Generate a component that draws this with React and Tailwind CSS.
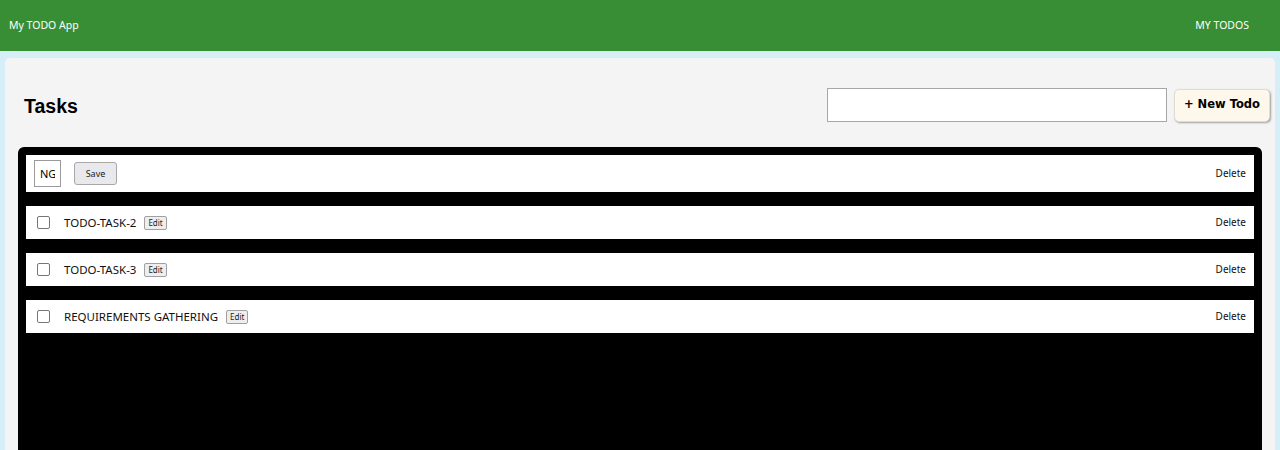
import React, { useState } from 'react';

const todos = [
    { id: 2, title: 'TODO-TASK-2' },
    { id: 3, title: 'TODO-TASK-3' },
    { id: 4, title: 'REQUIREMENTS GATHERING' },
];

function TodoRow({ todo }) {
    return (
        <div className="flex items-center h-[33px] bg-white pl-[11px] pr-[8px]">
            <input type="checkbox" className="w-[13px] h-[13px] m-0 appearance-none border border-[#767676] rounded-[2px] bg-white" />
            <span className="ml-[14px] text-[11.5px] text-[#111]">{todo.title}</span>
            <button className="ml-[8px] h-[14px] px-[3px] text-[8px] leading-none bg-[#eeeef0] border border-[#a0a0a0] rounded-[2px] text-[#222]">Edit</button>
            <button className="ml-auto text-[10px] text-[#111]">Delete</button>
        </div>
    );
}

export default function App() {
    const [name, setName] = useState('NG');

    return (
        <div className="min-h-[450px] bg-[#d6eef8] font-['Noto_Sans','Open_Sans',sans-serif]">
            {/* header */}
            <div className="flex items-center justify-between h-[51px] bg-[#388e35] text-white text-[10.5px] pl-[9px] pr-[31px]">
                <span>My TODO App</span>
                <span>MY TODOS</span>
            </div>

            <div className="px-[5px] pt-[7px]">
                <div className="bg-[#f4f4f4] rounded-t-[5px] px-[13px] pt-[30px]">
                    <div className="flex items-center justify-between pl-[6px] -mr-[8px]">
                        <h1 className="text-[19.5px] font-bold text-black font-['Liberation_Sans',sans-serif] mt-[3px]">Tasks</h1>
                        <div className="flex items-center gap-[7px]">
                            <input className="w-[340px] h-[34px] bg-white border border-[#a7a7a7] outline-none" />
                            <button className="h-[33px] px-[9px] text-[11.5px] font-bold bg-[#fdf7ec] rounded-[5px] border border-[#e0dccf] shadow-[1px_1px_2px_rgba(0,0,0,0.35)] font-['DejaVu_Sans',sans-serif] text-black">
                                + New Todo
                            </button>
                        </div>
                    </div>

                    <div className="mt-[25px] bg-black rounded-t-[6px] p-[8px] min-h-[320px] flex flex-col gap-[14px]">
                        <div className="flex items-center h-[37px] bg-white pl-[8px] pr-[8px]">
                            <input
                                value={name}
                                onChange={(e) => setName(e.target.value)}
                                className="w-[27px] h-[27px] border border-[#9a9a9a] text-[11px] px-[5px] outline-none"
                            />
                            <button className="ml-[13px] w-[43px] h-[23px] text-[9px] bg-[#e9e9ed] border border-[#a8a8a8] rounded-[3px] text-[#222]">Save</button>
                            <button className="ml-auto text-[10px] text-[#111]">Delete</button>
                        </div>
                        {todos.map((t) => (
                            <TodoRow key={t.id} todo={t} />
                        ))}
                    </div>
                </div>
            </div>
        </div>
    );
}
